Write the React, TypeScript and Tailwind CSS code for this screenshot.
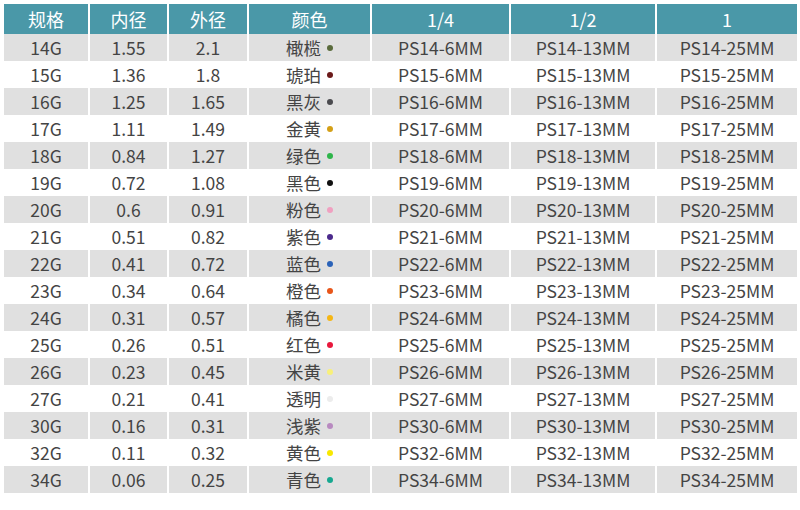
import React from "react";

const rows: [string, string, string, string, string, string][] = [
  ["14G","1.55","2.1","橄榄","#5a6b3c","14"],
  ["15G","1.36","1.8","琥珀","#6b1a1a","15"],
  ["16G","1.25","1.65","黑灰","#4a4a4e","16"],
  ["17G","1.11","1.49","金黄","#d4a017","17"],
  ["18G","0.84","1.27","绿色","#2fb54a","18"],
  ["19G","0.72","1.08","黑色","#111111","19"],
  ["20G","0.6","0.91","粉色","#f0a0c0","20"],
  ["21G","0.51","0.82","紫色","#4b2a8c","21"],
  ["22G","0.41","0.72","蓝色","#2a62b8","22"],
  ["23G","0.34","0.64","橙色","#e8561a","23"],
  ["24G","0.31","0.57","橘色","#f5b614","24"],
  ["25G","0.26","0.51","红色","#e8183c","25"],
  ["26G","0.23","0.45","米黄","#f8f07a","26"],
  ["27G","0.21","0.41","透明","#ececec","27"],
  ["30G","0.16","0.31","浅紫","#b88ac0","30"],
  ["32G","0.11","0.32","黄色","#f8e800","32"],
  ["34G","0.06","0.25","青色","#16a890","34"],
];

const cols = "grid grid-cols-[84px_77px_78px_121px_137px_144px_140px] gap-x-[2px]";

export default function App() {
  return (
    <div className="w-[800px] h-[510px] bg-white pt-[4px] pl-[4px] text-[17.5px] text-[#444]" style={{ fontFamily: '"Noto Sans CJK SC", "Noto Sans", sans-serif' }}>
      <div className={`${cols} h-[30px] text-white leading-[30px] text-center text-[18px]`}>
        {["规格","内径","外径","颜色","1/4","1/2","1"].map((h) => (
          <div key={h} className="bg-[#4a98a8]">{h}</div>
        ))}
      </div>
      {rows.map((r, i) => {
        const bg = i % 2 === 0 ? "bg-[#e0e0e0]" : "bg-white";
        return (
          <div key={r[0]} className={`${cols} h-[27px] leading-[27px] text-center`}>
            <div className={bg}>{r[0]}</div>
            <div className={bg}>{r[1]}</div>
            <div className={bg}>{r[2]}</div>
            <div className={`${bg} flex items-center justify-center gap-[6px]`}>
              <span>{r[3]}</span>
              <span className="w-[6px] h-[6px] rounded-full inline-block" style={{ backgroundColor: r[4] }} />
            </div>
            <div className={bg}>PS{r[5]}-6MM</div>
            <div className={bg}>PS{r[5]}-13MM</div>
            <div className={bg}>PS{r[5]}-25MM</div>
          </div>
        );
      })}
    </div>
  );
}
